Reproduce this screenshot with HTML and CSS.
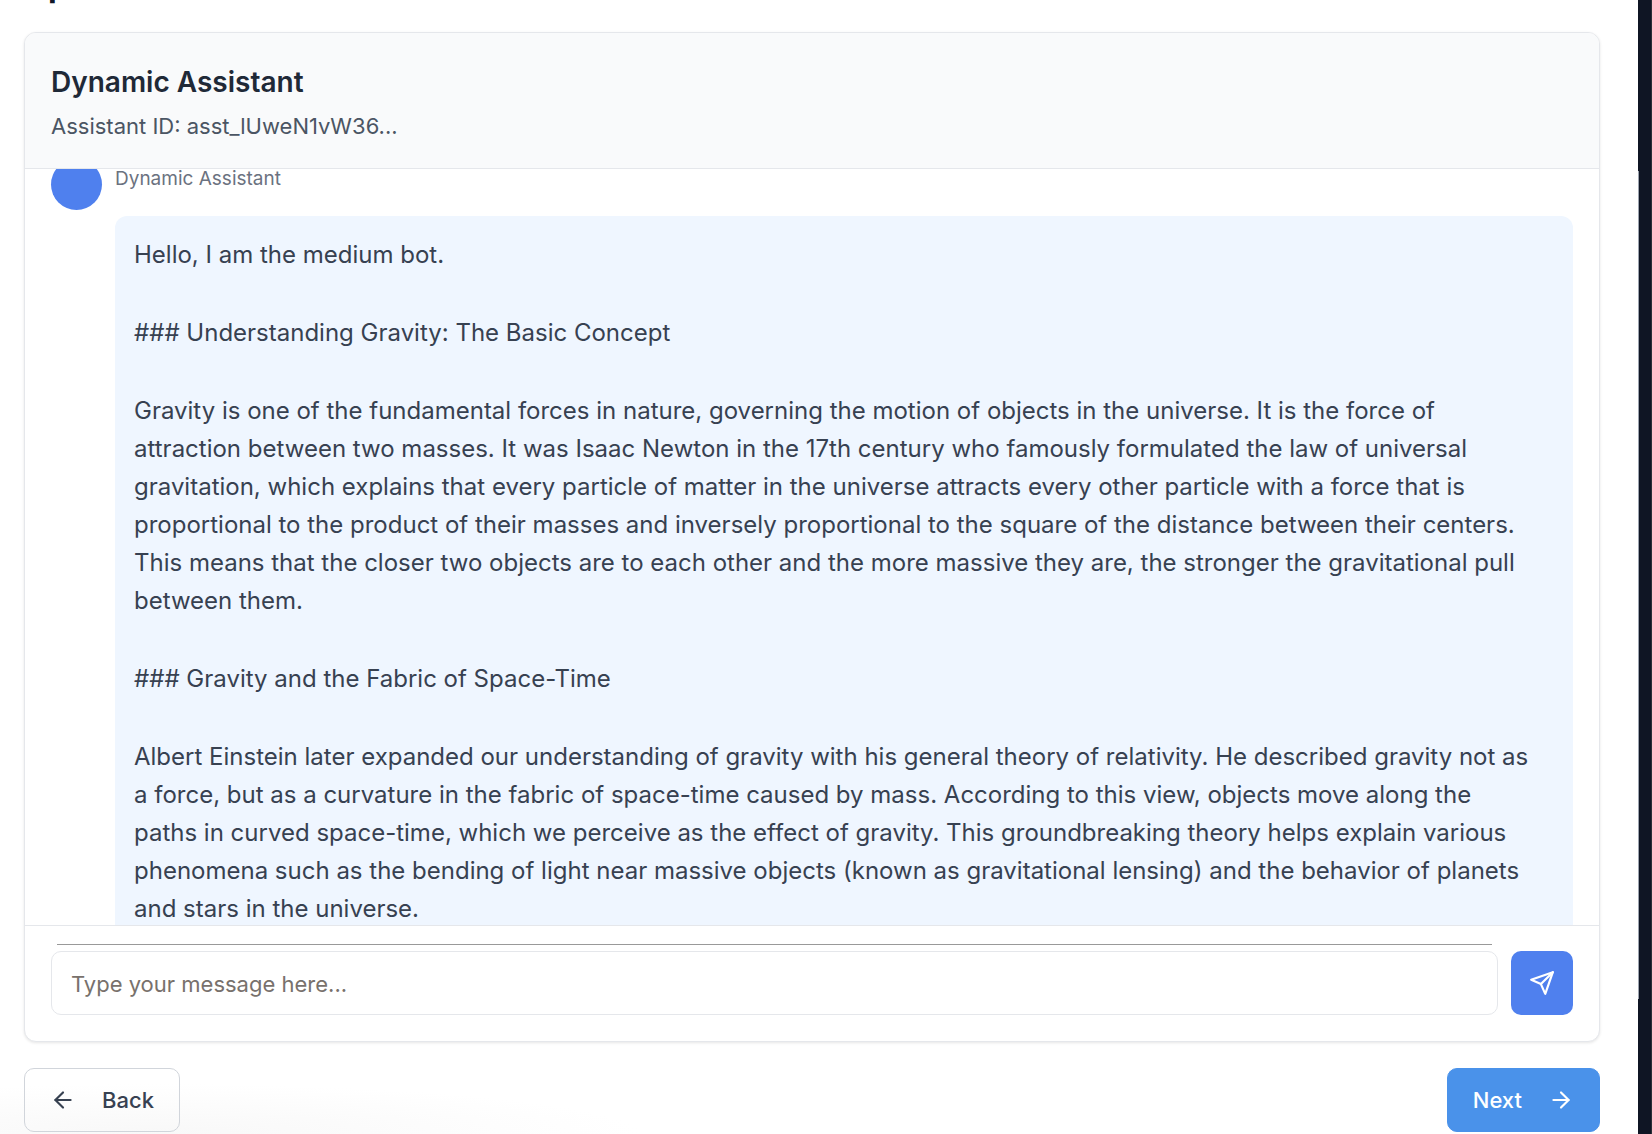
FILE: index.html
```html
<!DOCTYPE html>
<html lang="en">
<head>
<meta charset="utf-8">
<meta name="viewport" content="width=device-width, initial-scale=1">
<title>Dynamic Assistant</title>
<link rel="stylesheet" href="styles.css">
</head>
<body>
<main class="page">
  <h1 class="page-title">p</h1>
  <section class="chat">
    <header class="chat-header">
      <h2 class="chat-title">Dynamic Assistant</h2>
      <p class="chat-id">Assistant ID: asst_lUweN1vW36...</p>
    </header>
    <div class="messages">
      <article class="message">
        <div class="avatar"></div>
        <div class="message-body">
          <div class="author">Dynamic Assistant</div>
          <div class="bubble">
            <p>Hello, I am the medium bot.</p>
            <p>### Understanding Gravity: The Basic Concept</p>
            <p>Gravity is one of the fundamental forces in nature, governing the motion of objects in the universe. It is the force of<br>
            attraction between two masses. It was Isaac Newton in the 17th century who famously formulated the law of universal<br>
            gravitation, which explains that every particle of matter in the universe attracts every other particle with a force that is<br>
            proportional to the product of their masses and inversely proportional to the square of the distance between their centers.<br>
            This means that the closer two objects are to each other and the more massive they are, the stronger the gravitational pull<br>
            between them.</p>
            <p>### Gravity and the Fabric of Space-Time</p>
            <p>Albert Einstein later expanded our understanding of gravity with his general theory of relativity. He described gravity not as<br>
            a force, but as a curvature in the fabric of space-time caused by mass. According to this view, objects move along the<br>
            paths in curved space-time, which we perceive as the effect of gravity. This groundbreaking theory helps explain various<br>
            phenomena such as the bending of light near massive objects (known as gravitational lensing) and the behavior of planets<br>
            and stars in the universe.</p>
          </div>
        </div>
      </article>
    </div>
    <form class="composer">
      <div class="field">
        <div class="field-line"></div>
        <input class="input" type="text" aria-label="Message" placeholder="Type your message here...">
      </div>
      <button class="send" type="button" aria-label="Send">
        <svg class="icon" viewBox="0 0 24 24"><path d="M22 2 11 13"/><path d="M22 2 15 22 11 13 2 9Z"/></svg>
      </button>
    </form>
  </section>
  <nav class="steps">
    <button class="step back" type="button">
      <svg class="icon" viewBox="0 0 24 24"><path d="M19 12H5"/><path d="m12 19-7-7 7-7"/></svg>
      Back
    </button>
    <button class="step next" type="button">
      Next
      <svg class="icon" viewBox="0 0 24 24"><path d="M5 12h14"/><path d="m12 5 7 7-7 7"/></svg>
    </button>
  </nav>
</main>
<aside class="edge"><div class="edge-thumb"></div></aside>
</body>
</html>
```
FILE: styles.css
```css
* {
  box-sizing: border-box;
}

body {
  margin: 0;
  height: 100vh;
  display: flex;
  overflow: hidden;
  background: #fff;
  color: #374151;
  font-family: Inter, "Liberation Sans", sans-serif;
}

h1,
h2,
p {
  margin: 0;
}

.page {
  flex: 1;
  min-width: 0;
  display: flex;
  flex-direction: column;
  padding: 0 38px 2px 24px;
  background: radial-gradient(ellipse 480px 50px at 160px 100%, #f8f8f8, #fff) no-repeat;
}

.page-title {
  flex: none;
  height: 32px;
  padding-left: 24px;
  color: #111827;
  font-size: 32px;
  font-weight: 700;
  line-height: 30px;
  margin-top: -29px;
  margin-bottom: 29px;
}

.chat {
  flex: 1;
  min-height: 0;
  display: flex;
  flex-direction: column;
  overflow: hidden;
  border: 1px solid #e5e7eb;
  border-radius: 12px;
  background: #fff;
  box-shadow: 0 1px 3px rgba(0, 0, 0, 0.1);
}

.chat-header {
  padding: 31px 26px 24px;
  border-bottom: 1px solid #e5e7eb;
  background: #f9fafb;
}

.chat-title {
  color: #1f2937;
  font-size: 28px;
  font-weight: 600;
  line-height: 36px;
}

.chat-id {
  margin-top: 8px;
  color: #4b5563;
  font-size: 22px;
  line-height: 36px;
}

.messages {
  flex: 1;
  min-height: 0;
  overflow: hidden;
  padding: 0 26px;
}

.message {
  display: flex;
  gap: 13px;
  margin-top: -10px;
}

.avatar {
  flex: none;
  width: 51px;
  height: 51px;
  border-radius: 50%;
  background: #4f80ee;
}

.message-body {
  flex: 1;
  min-width: 0;
}

.author {
  padding: 7px 0 24px;
  color: #6b7280;
  font-size: 19px;
  line-height: 26px;
}

.bubble {
  display: flex;
  flex-direction: column;
  gap: 40px;
  padding: 20px 19px;
  border-radius: 12px;
  background: #eff6ff;
  font-size: 24px;
  line-height: 38px;
}

.composer {
  display: flex;
  align-items: flex-end;
  gap: 13px;
  padding: 18px 26px 26px;
  border-top: 1px solid #e5e7eb;
}

.field {
  flex: 1;
}

.field-line {
  height: 1px;
  margin: 0 6px 6px;
  background: #999;
}

.input {
  display: block;
  width: 100%;
  height: 64px;
  padding: 1px 19px 0;
  border: 1px solid #e5e7eb;
  border-radius: 10px;
  background: #fff;
  font: inherit;
  font-size: 22px;
}

.input::placeholder {
  color: #78716c;
}

.send {
  width: 62px;
  height: 64px;
  display: grid;
  place-items: center;
  padding: 0;
  border: 0;
  border-radius: 10px;
  background: #4f80ee;
  color: #fff;
}

.icon {
  width: 26px;
  height: 26px;
  fill: none;
  stroke: currentColor;
  stroke-width: 2;
  stroke-linecap: round;
  stroke-linejoin: round;
}

.steps {
  flex: none;
  display: flex;
  justify-content: space-between;
  margin-top: 26px;
}

.step {
  height: 64px;
  display: flex;
  align-items: center;
  gap: 26px;
  padding: 0 25px;
  border: 1px solid #d1d5db;
  border-radius: 10px;
  font: inherit;
  font-size: 22px;
  font-weight: 500;
}

.back {
  background: transparent;
  color: #374151;
}

.next {
  border-color: #4a92ea;
  background: #4a92ea;
  color: #fff;
}

.edge {
  flex: none;
  width: 14px;
  padding: 171px 0 135px;
  border-right: 1px solid #293038;
  background: #0f1524;
}

.edge-thumb {
  width: 1px;
  height: 100%;
  background: #9ca3af;
}
```
